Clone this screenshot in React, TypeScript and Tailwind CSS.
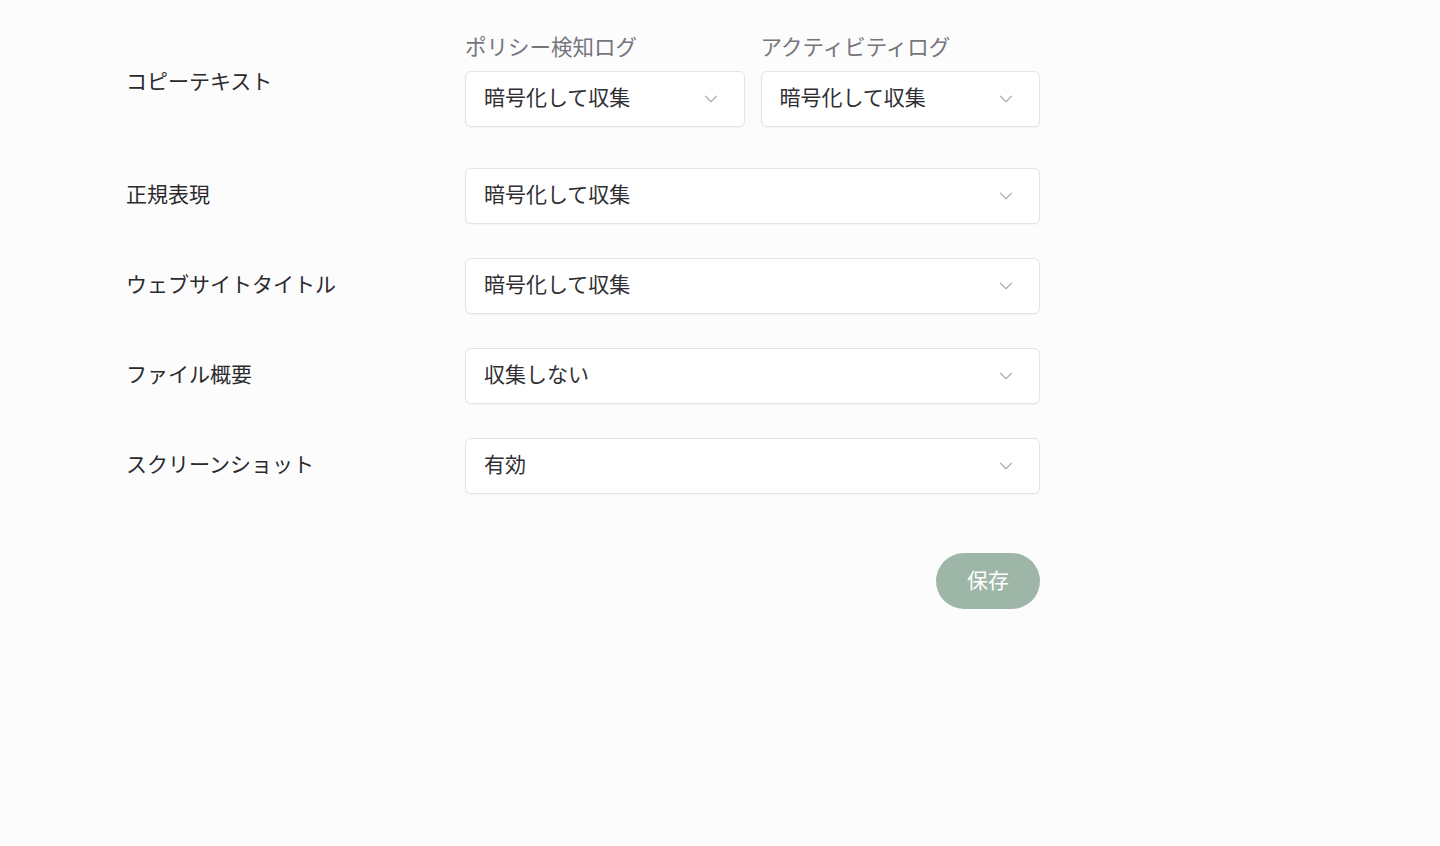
import React from "react";
import { ChevronDown } from "lucide-react";

const font = { fontFamily: '"Noto Sans CJK JP", "Noto Sans", sans-serif' };

function Select({ value, className = "" }: { value: string; className?: string }) {
  return (
    <div
      className={`flex h-[56px] items-center justify-between rounded-md border border-[#e4e4e7] bg-white pl-[18px] pr-[22px] shadow-[0_1px_2px_rgba(0,0,0,0.04)] ${className}`}
    >
      <span className="pb-[4px] text-[21px] text-[#2f2f33]">{value}</span>
      <ChevronDown className="h-[22px] w-[22px] text-[#b0b0b5]" strokeWidth={1.4} />
    </div>
  );
}

function Row({
  label,
  labelClass = "",
  children,
}: {
  label: string;
  labelClass?: string;
  children: React.ReactNode;
}) {
  return (
    <div className="flex items-center">
      <div className={`w-[339px] text-[21px] text-[#2a2a2e] ${labelClass}`}>{label}</div>
      <div className="w-[575px]">{children}</div>
    </div>
  );
}

export default function App() {
  return (
    <div className="min-h-[846px] w-full bg-[#fdfcfc]" style={font}>
      <div className="flex flex-col pl-[126px] pt-[31px]">
        <Row label="コピーテキスト" labelClass="pt-[3px]">
          <div className="grid grid-cols-2 gap-[16px]">
            <div className="flex flex-col gap-[10px]">
              <span className="text-[21.5px] leading-[30px] text-[#75757c]">ポリシー検知ログ</span>
              <Select value="暗号化して収集" />
            </div>
            <div className="flex flex-col gap-[10px]">
              <span className="text-[21.5px] leading-[30px] text-[#75757c]">アクティビティログ</span>
              <Select value="暗号化して収集" />
            </div>
          </div>
        </Row>
        <div className="mt-[41px] flex flex-col gap-[34px]">
          <Row label="正規表現" labelClass="pb-[4px]">
            <Select value="暗号化して収集" />
          </Row>
          <Row label="ウェブサイトタイトル" labelClass="pb-[4px]">
            <Select value="暗号化して収集" />
          </Row>
          <Row label="ファイル概要" labelClass="pb-[4px]">
            <Select value="収集しない" />
          </Row>
          <Row label="スクリーンショット" labelClass="pb-[4px]">
            <Select value="有効" />
          </Row>
        </div>
        <div className="mt-[59px] flex w-[914px] justify-end">
          <button className="h-[56px] w-[104px] rounded-full bg-[#9db6a7] pb-[3px] text-[21px] text-white">
            保存
          </button>
        </div>
      </div>
    </div>
  );
}
